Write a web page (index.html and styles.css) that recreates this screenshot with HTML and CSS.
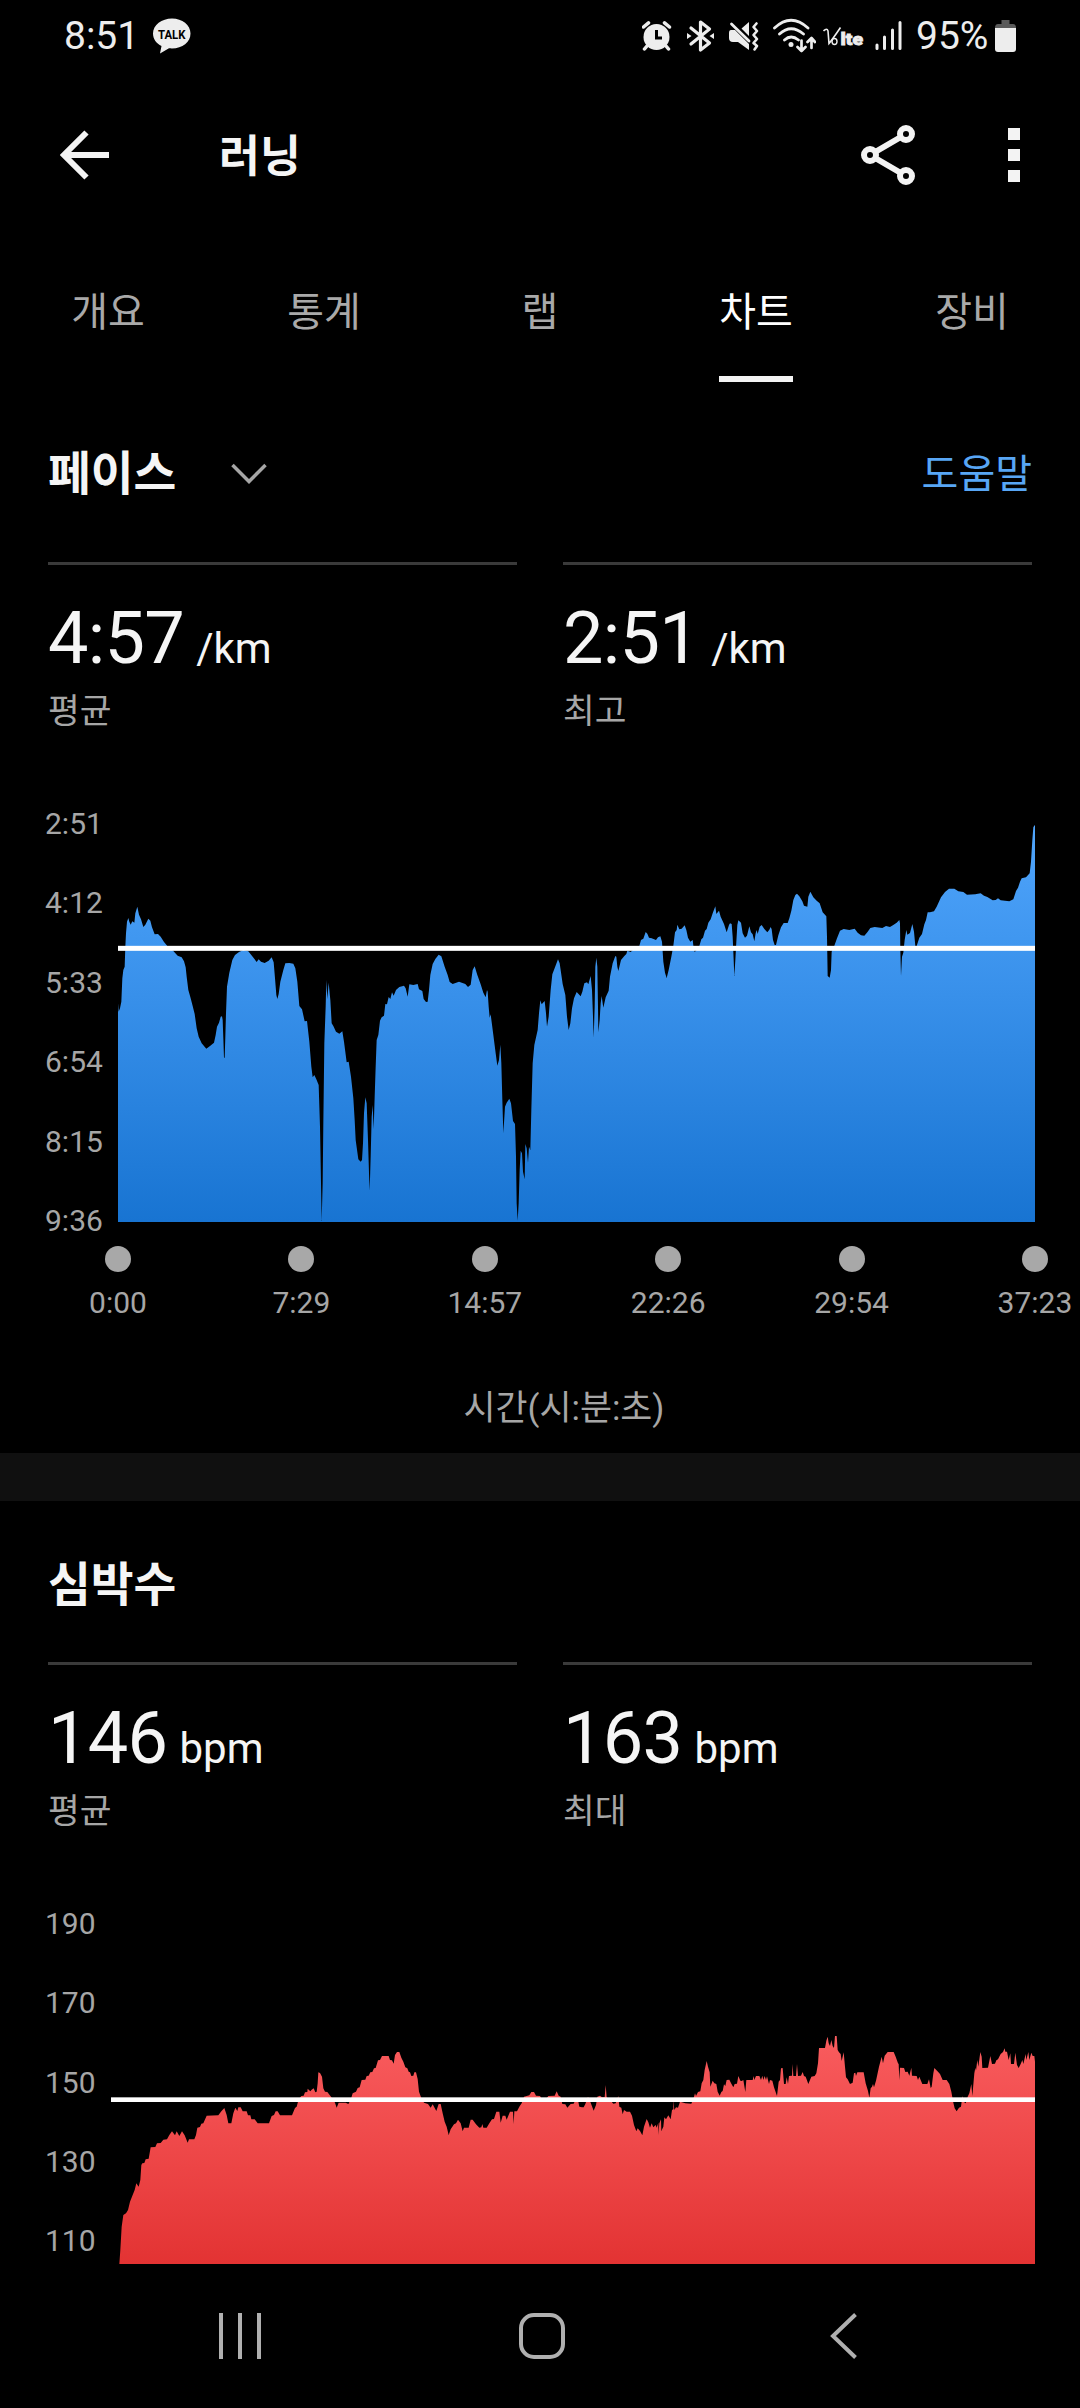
FILE: index.html
```html
<!DOCTYPE html>
<html lang="ko">

<head>
    <meta charset="utf-8" />
    <title>러닝</title>
    <link rel="stylesheet" href="styles.css">
</head>

<body>
    <div class="status-bar">
        <span class="clock">8:51</span>
        <svg class="talk" width="38" height="36" viewBox="0 0 38 36">
            <path d="M19 0.5C8.800.5 0 7 0 15.500C0 21 3.500 25.500 8.500 28L7 35.500L16 30.300C28 31.500 37.500 25 37.500 15.500C37.500 7 29.200.5 19 .5Z" fill="#ededed" />
            <text x="5" y="20.500" textLength="27.500" lengthAdjust="spacingAndGlyphs">TALK</text>
        </svg>
        <div class="status-icons">
            <svg class="alarm" width="30" height="36" viewBox="0 0 30 36">
                <circle cx="14.500" cy="19" r="13" fill="#ededed" />
                <path d="M1.500 9L6.500 4.800M27.500 9L22.500 4.800M5 28L2.500 31M24 28L26.500 31" stroke="#ededed" stroke-width="3.500" stroke-linecap="round" />
                <path d="M14.500 12V20H20" fill="none" stroke="#000" stroke-width="3" />
            </svg>
            <svg class="bluetooth" width="28" height="36" viewBox="0 0 28 36">
                <path d="M4 10L22.500 25L13.500 32V4L22.500 11L4 26" fill="none" stroke="#ededed" stroke-width="3.200" stroke-linejoin="round" stroke-linecap="round" />
                <path d="M0 15L4.500 18L0 21ZM27 15L22.500 18L27 21Z" fill="#ededed" />
            </svg>
            <svg class="mute" width="30" height="36" viewBox="0 0 30 36">
                <path d="M2 12H6L20 26V32L9 24H4Q0 24 0 20V15Q0 12 2 12ZM20 4V18L12.500 10.500Z" fill="#ededed" />
                <path d="M2.500 6L20 23" stroke="#ededed" stroke-width="2.800" stroke-linecap="round" />
                <path d="M27.500 5.500L24.500 9L28 13L24.500 17L28 21L24.500 25L28 28L25.500 31.500" fill="none" stroke="#ededed" stroke-width="2.600" stroke-linejoin="round" stroke-linecap="round" />
            </svg>
            <svg class="wifi" width="43" height="36" viewBox="0 0 43 36">
                <path d="M1.500 10Q18-5.500 35 10M6.500 16Q18 5.500 30.500 16M11.500 22Q18 16 25.500 22" fill="none" stroke="#ededed" stroke-width="2.800" stroke-linecap="round" />
                <circle cx="18" cy="26.500" r="2.500" fill="#ededed" />
                <path d="M28.500 22.500V33M24.500 29L28.500 33L32.500 29M38.500 30V20.500M34.500 24L38.500 20L42 24" fill="none" stroke="#ededed" stroke-width="2.700" stroke-linecap="round" stroke-linejoin="round" />
            </svg>
            <svg class="volte" width="41" height="36" viewBox="0 0 41 36">
                <path d="M0.500 13Q4 9.500 5 13L6 25.500Q9 22 17.500 9.500" fill="none" stroke="#ededed" stroke-width="1.600" />
                <ellipse cx="11.500" cy="23.500" rx="2.500" ry="3" fill="none" stroke="#ededed" stroke-width="1.400" />
                <text x="17.500" y="27" textLength="22.500" lengthAdjust="spacingAndGlyphs">lte</text>
            </svg>
            <svg class="signal" width="27" height="36" viewBox="0 0 27 36">
                <path d="M2 27V30.500M9.500 19V30.500M17.500 12V30.500M25 4.500V30.500" stroke="#ededed" stroke-width="3" stroke-linecap="round" />
            </svg>
            <span class="percent">95%</span>
            <svg class="battery" width="21" height="36" viewBox="0 0 21 36">
                <path d="M6.500 2H14.500V6H18Q21 6 21 10H0Q0 6 3 6H6.500Z" fill="#5a5a5a" />
                <path d="M0 10H21V31Q21 34 18 34H3Q0 34 0 31Z" fill="#ededed" />
            </svg>
        </div>
    </div>

    <header class="app-bar">
        <svg width="50" height="50" viewBox="0 0 50 50">
            <path d="M26.500 2.500L4 25L26.500 47.500M5 25H49" fill="none" stroke="#f3f3f3" stroke-width="6" />
        </svg>
        <h1>러닝</h1>
        <svg class="share" width="54" height="60" viewBox="0 0 54 60">
            <path d="M9 30L45 9M9 30L45 51" stroke="#f3f3f3" stroke-width="6" />
            <g fill="#000" stroke="#f3f3f3" stroke-width="6">
                <circle cx="9" cy="30" r="6" />
                <circle cx="45" cy="9" r="6" />
                <circle cx="45" cy="51" r="6" />
            </g>
        </svg>
        <div class="menu">
            <i></i>
            <i></i>
            <i></i>
        </div>
    </header>

    <nav class="tabs">
        <a>개요</a>
        <a>통계</a>
        <a>랩</a>
        <a class="active">차트</a>
        <a>장비</a>
    </nav>

    <section class="pace">
        <div class="section-head">
            <h2>페이스</h2>
            <svg width="36" height="22" viewBox="0 0 36 22">
                <path d="M1.500 2L18 18.500L34.500 2" fill="none" stroke="#a6a6a6" stroke-width="3.500" />
            </svg>
            <a class="help">도움말</a>
        </div>
        <div class="stats">
            <div class="stat">
                <p class="value">4:57 <small>/km</small></p>
                <p class="label">평균</p>
            </div>
            <div class="stat">
                <p class="value">2:51 <small>/km</small></p>
                <p class="label">최고</p>
            </div>
        </div>
        <div class="chart pace-chart">
            <div class="y-axis">
                <span>2:51</span>
                <span>4:12</span>
                <span>5:33</span>
                <span>6:54</span>
                <span>8:15</span>
                <span>9:36</span>
            </div>
            <svg class="plot" width="917" height="397" viewBox="264 105 2751 1191">
                <defs>
                    <linearGradient id="blue" gradientUnits="userSpaceOnUse" x1="0" y1="105" x2="0" y2="1296">
                        <stop offset="0" stop-color="#50a5fc" />
                        <stop offset="1" stop-color="#1874d2" />
                    </linearGradient>
                </defs>
                <polygon fill="url(#blue)" points="264,1296 264,640 266,665 270,655 274,635 277,565 280,540 284,530 286,470 288,430 291,395 295,384 298,395 302,404 307,394 313,398 316,370 322,350 327,374 333,388 340,411 346,404 355,386 361,392 366,412 374,433 384,432 392,440 402,456 412,468 430,483 443,497 455,502 462,514 467,532 470,560 475,600 482,625 488,648 494,672 500,715 506,740 515,760 529,776 540,768 552,758 557,735 561,710 567,698 572,680 576,679 578,690 580,745 582,803 584,803 586,740 588,670 591,590 598,548 607,510 615,495 627,486 640,480 655,484 668,500 680,516 686,508 693,515 704,519 716,512 725,502 731,517 735,565 739,615 742,627 746,612 751,575 760,540 766,520 778,519 790,521 796,535 802,575 808,648 816,658 824,694 831,693 838,755 844,830 848,862 853,855 859,868 866,885 870,1010 873,1180 875,1293 878,1180 880,1000 883,760 887,650 889,570 892,628 896,578 901,630 905,700 910,708 918,725 928,731 937,724 942,755 950,817 956,815 963,860 970,925 974,990 977,1050 985,1108 992,1115 996,1110 999,1060 1002,970 1006,922 1010,940 1014,1050 1017,1150 1019,1202 1022,1100 1025,980 1028,945 1031,1018 1034,920 1037,830 1040,750 1045,735
                    1050,692 1055,682 1062,677 1066,642 1071,643 1076,621 1081,627 1086,607 1091,617 1098,600 1108,591 1122,587 1127,595 1133,620 1138,583 1150,585 1163,582 1167,598 1177,603 1181,627 1188,636 1193,635 1197,600 1201,555 1208,522 1216,507 1226,494 1234,499 1244,530 1253,555 1259,576 1268,582 1287,575 1306,582 1314,591 1322,584 1328,540 1334,529 1342,555 1352,583 1360,608 1367,622 1371,600 1373,605 1376,650 1379,683 1382,673 1390,735 1397,790 1402,827 1407,810 1411,764 1414,820 1417,930 1420,1030 1425,950 1430,938 1438,926 1443,940 1449,993 1455,1002 1458,1100 1460,1240 1463,1292 1466,1240 1469,1140 1472,1082 1476,1090 1479,1145 1484,1168 1486,1062 1490,1075 1494,1118 1497,1070 1501,1080 1504,960 1508,820 1513,765 1523,720 1527,670 1531,631 1535,643 1544,633 1548,670 1551,710 1556,680 1562,600 1567,553 1575,532 1584,508 1589,520 1598,582 1606,615 1611,680 1616,720 1621,700 1626,655 1632,625 1640,606 1652,619 1657,605 1663,580 1671,577 1675,583 1682,558 1686,600 1689,680 1691,743 1694,650 1696,530 1699,503 1702,530 1704,650 1705,727 1709,690 1712,640 1715,618 1720,653 1727,622 1736,602 1740,560 1748,520 1756,498 1759,500 1762,530 1765,543 1773,510 1783,498 1789,492 1792,482 1802,486 1815,475 1828,468 1833,450 1840,446 1847,426 1852,431 1857,443 1865,445 1878,450 1884,442 1891,439 1896,455 1900,515 1905,548 1910,564 1916,540 1924,500 1930,467 1935,427 1940,420 1942,404 1948,418 1955,416 1964,406 1969,420 1974,443 1981,455 1988,450 1991,475 1994,486 2000,480 2008,468 2014,448 2019,443 2025,422 2030,417 2035,398 2042,388 2048,370 2056,349 2059,372 2067,362 2072,380 2082,402 2090,427 2097,405
                    2100,400 2105,402 2108,440 2111,510 2113,558 2116,510 2119,455 2122,405 2125,391 2133,398 2138,430 2145,443 2151,437 2158,409 2163,427 2168,433 2173,454 2177,430 2180,420 2183,432 2189,410 2195,405 2203,417 2212,427 2218,419 2222,411 2225,418 2229,450 2234,465 2238,465 2245,436 2253,412 2261,399 2273,399 2278,385 2284,362 2290,330 2296,315 2301,311 2308,319 2317,334 2322,347 2332,350 2335,320 2341,305 2350,322 2360,332 2369,340 2378,367 2389,379 2391,440 2393,558 2399,563 2403,540 2405,485 2413,467 2421,445 2430,422 2441,417 2458,420 2474,416 2483,428 2493,436 2503,437 2512,427 2521,414 2534,411 2557,414 2568,408 2580,411 2591,404 2600,398 2608,390 2610,400 2611,480 2613,558 2616,500 2620,488 2624,450 2629,420 2632,434 2640,429 2647,402 2652,425 2656,468 2660,468 2668,443 2676,432 2683,403 2688,390 2693,367 2700,367 2712,364 2720,350 2733,322 2745,306 2757,296 2773,296 2785,304 2800,306 2811,314 2836,313 2852,310 2862,317 2872,321 2888,331 2897,330 2904,325 2912,331 2938,334 2950,328 2958,303 2964,293 2970,275 2975,265 2988,262 2999,250 3003,215 3007,150 3010,112 3014,105 3015,108 3015,1296" />
                <rect x="264" y="467.500" width="2751" height="15" fill="#fff" />
            </svg>
        </div>
        <div class="x-axis">
            <span>0:00</span>
            <span>7:29</span>
            <span>14:57</span>
            <span>22:26</span>
            <span>29:54</span>
            <span>37:23</span>
        </div>
        <p class="caption">시간(시:분:초)</p>
    </section>

    <section class="heart">
        <div class="section-head">
            <h2>심박수</h2>
        </div>
        <div class="stats">
            <div class="stat">
                <p class="value">146 <small>bpm</small></p>
                <p class="label">평균</p>
            </div>
            <div class="stat">
                <p class="value">163 <small>bpm</small></p>
                <p class="label">최대</p>
            </div>
        </div>
        <div class="chart heart-chart">
            <div class="y-axis">
                <span>190</span>
                <span>170</span>
                <span>150</span>
                <span>130</span>
                <span>110</span>
            </div>
            <svg class="plot" width="924" height="341" viewBox="243 129 2772 1023">
                <defs>
                    <linearGradient id="red" gradientUnits="userSpaceOnUse" x1="0" y1="468" x2="0" y2="1152">
                        <stop offset="0" stop-color="#f95c5e" />
                        <stop offset="1" stop-color="#e33333" />
                    </linearGradient>
                </defs>
                <polygon fill="url(#red)" points="268,1152 271,1110 275,1040 280,1005 288,1000 294,990 300,965 308,945 314,930 319,910 326,920 331,900 334,855 337,850 343,849 347,838 356,836 362,802 376,801 381,790 392,789 400,779 411,778 418,765 426,754 435,766 440,754 448,768 456,754 464,766 473,788 477,778 493,778 498,765 502,743 510,741 514,731 520,730 530,707 565,706 574,694 583,684 590,705 595,730 604,730 610,700 616,683 622,693 625,682 632,682 638,694 650,694 654,706 661,706 664,718 674,718 683,730 717,730 725,708 732,705 737,694 743,694 750,706 786,706 795,684 800,680 806,658 814,648 821,647 825,637 832,636 833,626 841,634 845,629 851,625 856,637 860,635 863,610 865,577 870,579 876,590 880,625 885,635 892,636 903,650 915,668 920,683 926,668 947,668 955,672 962,660 968,640 978,635 983,624 989,622 995,600 1006,599 1010,588 1016,587 1021,577 1027,576 1032,565 1037,564 1044,541 1050,540
                    1056,528 1076,528 1080,540 1086,541 1091,551 1095,525 1101,516 1108,516 1114,533 1120,545 1126,562 1132,565 1136,575 1140,577 1144,588 1150,587 1153,577 1158,577 1163,597 1167,635 1173,652 1182,668 1194,672 1202,683 1208,673 1219,693 1226,672 1232,672 1238,700 1244,725 1250,740 1256,765 1262,748 1272,733 1278,730 1284,719 1292,730 1298,754 1302,743 1316,743 1322,719 1328,719 1338,733 1348,743 1354,742 1357,732 1360,743 1370,743 1378,730 1386,718 1392,717 1399,695 1408,695 1412,728 1418,707 1426,707 1430,719 1440,695 1449,695 1451,732 1453,694 1461,694 1468,680 1475,670 1482,650 1498,646 1504,636 1512,636 1518,647 1530,648 1536,658 1548,658 1555,648 1574,647 1580,634 1586,647 1592,650 1597,672 1606,673 1612,683 1622,672 1631,671 1636,660 1644,660 1648,680 1656,682 1661,682 1666,672 1674,650 1682,668 1691,692 1698,675 1702,650 1710,647 1716,652 1724,652 1727,615 1730,652 1740,660 1750,671 1757,670 1765,648 1768,680 1774,683 1778,703 1782,690 1790,695 1800,695 1806,707 1812,735 1819,754 1823,745 1830,753 1837,766 1842,740 1850,717 1855,727 1860,743 1865,730 1870,742 1877,735 1880,743 1885,728 1885,765 1888,730 1893,718 1894,753 1900,740 1903,712 1908,718 1915,706 1922,718 1926,690 1930,688 1930,660 1933,690 1938,682 1944,683 1950,665 1966,670 1984,671 1992,650 1995,640 1998,648 2004,636 2011,634 2015,610 2020,600 2024,570 2030,543 2034,560 2039,577 2041,620 2048,602 2053,610 2059,612 2063,635 2069,647 2074,636 2078,633 2082,613 2086,618 2090,600 2098,599
                    2104,611 2110,622 2114,612 2121,611 2125,588 2131,602 2135,603 2140,600 2142,612 2146,636 2149,600 2168,600 2171,588 2173,600 2178,588 2188,588 2193,600 2197,587 2200,600 2204,588 2208,600 2211,589 2217,612 2220,600 2227,602 2232,622 2241,648 2246,605 2250,600 2253,565 2258,564 2262,612 2267,612 2270,592 2274,612 2277,588 2286,587 2288,552 2290,588 2298,588 2301,552 2304,588 2313,587 2318,576 2322,588 2327,590 2335,612 2344,590 2354,588 2359,580 2364,550 2367,504 2385,504 2389,482 2393,470 2396,490 2400,498 2404,480 2408,498 2412,504 2415,468 2420,468 2423,510 2427,517 2432,522 2435,543 2441,517 2445,560 2448,592 2453,598 2460,612 2468,608 2472,580 2476,578 2478,588 2482,577 2501,577 2507,610 2514,633 2518,653 2522,625 2526,620 2529,612 2532,622 2538,602 2547,560 2555,530 2559,550 2564,527 2573,516 2591,516 2597,530 2604,550 2606,552 2608,600 2610,563 2622,564 2626,576 2633,575 2638,587 2644,563 2646,587 2660,588 2664,600 2668,590 2672,600 2677,612 2692,612 2697,598 2702,624 2705,620 2710,580 2713,564 2724,575 2730,582 2738,600 2750,600 2758,612 2764,635 2770,668 2774,685 2780,694 2787,683 2793,680 2797,648 2801,665 2807,670 2813,650 2818,640 2824,612 2827,648 2833,580 2836,563 2838,572 2842,540 2845,560 2851,516 2855,530 2857,564 2874,563 2881,528 2886,552 2895,551 2899,541 2904,538 2912,522 2919,516 2924,505 2926,515 2931,515 2936,540 2941,520 2943,552 2952,552 2956,518 2961,555 2966,564 2972,552 2977,540 2980,552 2987,522 2989,540 2995,516 2998,540 3004,518 3008,528 3013,528 3015,545 3015,1152" />
                <rect x="243" y="652" width="2772" height="14" fill="#fff" />
            </svg>
        </div>
    </section>

    <footer class="nav-bar">
        <svg width="46" height="46" viewBox="0 0 46 46">
            <path d="M4 0V46M23 0V46M42 0V46" stroke="#b0b0b0" stroke-width="4" />
        </svg>
        <svg width="46" height="46" viewBox="0 0 46 46">
            <rect x="2" y="2" width="42" height="42" rx="13" fill="none" stroke="#b0b0b0" stroke-width="4" />
        </svg>
        <svg width="46" height="46" viewBox="0 0 46 46">
            <path d="M34.500 1.500L12 23L34.500 44.500" fill="none" stroke="#b0b0b0" stroke-width="4" />
        </svg>
    </footer>
</body>

</html>
```

FILE: styles.css
```css
* {
    box-sizing: border-box;
}

body {
    margin: 0;
    width: 1080px;
    background-color: #000;
    color: #f5f5f5;
    font-family: Roboto, "Noto Sans CJK KR", sans-serif;
}

h1, h2, p {
    margin: 0;
}

svg {
    display: block;
    flex: none;
}

.status-bar {
    display: flex;
    align-items: center;
    height: 71px;
    padding: 0 64px;
    color: #ededed;
    font-size: 39px;
}

.clock {
    width: 89px;
}

.talk text {
    font-size: 12.5px;
    font-weight: 700;
    fill: #000;
}

.volte text {
    font-size: 17px;
    font-weight: 900;
    fill: #ededed;
    stroke: #ededed;
    stroke-width: 0.8px;
}

.status-icons {
    display: flex;
    align-items: center;
    margin-left: auto;
}

.bluetooth {
    margin-left: 15px;
}

.mute, .wifi {
    margin-left: 14px;
}

.volte {
    margin-left: 7px;
}

.signal {
    margin-left: 11px;
}

.percent {
    width: 77px;
    margin-left: 14px;
}

.battery {
    margin-left: 2px;
}

.app-bar {
    display: flex;
    align-items: center;
    height: 167px;
    padding: 0 60px;
}

.app-bar h1 {
    margin-left: 109px;
    padding-top: 4px;
    font-size: 44.5px;
    line-height: 60px;
    font-weight: 700;
}

.share {
    margin-left: auto;
}

.menu {
    display: flex;
    flex-direction: column;
    gap: 9px;
    margin-left: 93px;
}

.menu i {
    width: 12px;
    height: 12px;
    background-color: #f3f3f3;
}

.tabs {
    display: grid;
    grid-template-columns: repeat(5, 1fr);
    justify-items: center;
    height: 144px;
    padding-top: 45px;
}

.tabs a {
    height: 99px;
    color: #a9a9a9;
    font-size: 40px;
    line-height: 60px;
}

.tabs .active {
    color: #fff;
    border-bottom: 6px solid #f3f3f3;
}

.section-head {
    display: flex;
    align-items: center;
    height: 60px;
    padding: 0 48px;
}

.section-head h2 {
    font-size: 46.5px;
    line-height: 60px;
    font-weight: 700;
}

.section-head svg {
    margin-left: 55px;
}

.help {
    margin-left: auto;
    color: #58a6f5;
    font-size: 40px;
    line-height: 60px;
    padding-top: 1px;
}

.pace {
    height: 1119px;
    padding-top: 62px;
    border-bottom: 48px solid #101010;
}

.heart {
    padding-top: 54px;
}

.stats {
    display: grid;
    grid-template-columns: 1fr 1fr;
    gap: 46px;
    padding: 58px 48px 0;
}

.heart .stats {
    padding-top: 47px;
}

.stat {
    border-top: 3px solid #3a3a3a;
    padding-top: 32px;
}

.value {
    height: 84px;
    font-size: 72px;
    line-height: 84px;
    letter-spacing: -0.7px;
    word-spacing: -5px;
}

.value small {
    font-size: 42px;
    letter-spacing: 0;
}

.label {
    margin-top: 10px;
    color: #a6a6a6;
    font-size: 34.5px;
    line-height: 40px;
}

.chart {
    display: grid;
    margin-top: 73px;
    padding-left: 45px;
    color: #a6a6a6;
    font-size: 30px;
    line-height: 40px;
}

.y-axis {
    display: flex;
    flex-direction: column;
    justify-content: space-between;
}

.pace-chart {
    grid-template-columns: 73px 917px;
    height: 437px;
}

.pace-chart .plot {
    margin-top: 21px;
}

.heart-chart {
    grid-template-columns: 66px 924px;
    height: 360px;
}

.heart-chart .y-axis {
    height: 357px;
}

.heart-chart .plot {
    margin-top: 19px;
}

.x-axis {
    display: flex;
    justify-content: space-between;
    margin-top: 5px;
    padding-left: 73px;
    color: #a6a6a6;
    font-size: 30px;
    line-height: 40px;
}

.x-axis span {
    display: flex;
    flex-direction: column;
    align-items: center;
    gap: 11px;
    width: 90px;
}

.x-axis span::before {
    content: "";
    width: 26px;
    height: 26px;
    border-radius: 50%;
    background-color: #a8a8a8;
}

.caption {
    margin: 65px 0 0 48px;
    text-align: center;
    color: #a6a6a6;
    font-size: 34.8px;
    line-height: 40px;
}

.nav-bar {
    display: flex;
    align-items: center;
    justify-content: space-between;
    height: 144px;
    padding: 0 213px 0 217px;
}
```
